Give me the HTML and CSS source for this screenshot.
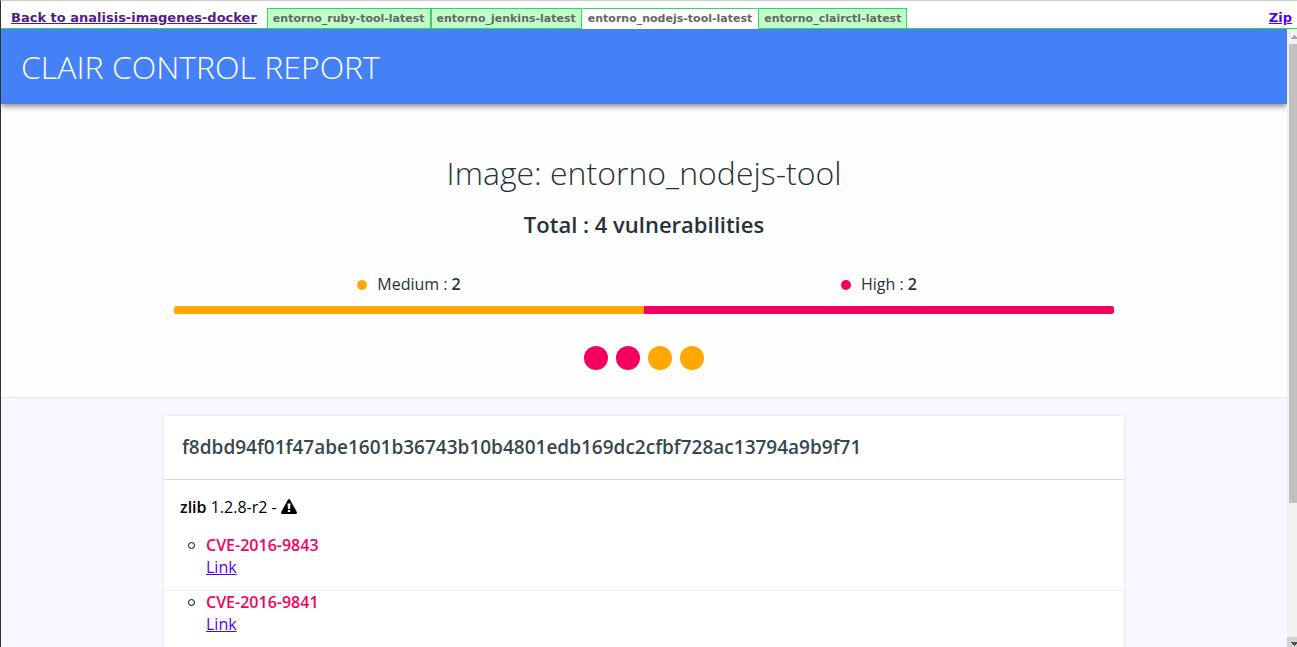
FILE: index.html
```
<!DOCTYPE html>
<html lang="en">
<head>
<meta charset="utf-8">
<title>Clair Control Report</title>
<link rel="stylesheet" href="styles.css">
</head>
<body>
<nav class="tabbar">
  <a class="back" href="#back">Back to analisis-imagenes-docker</a>
  <div class="tabs">
    <button class="tab" type="button">entorno_ruby-tool-latest</button>
    <button class="tab" type="button">entorno_jenkins-latest</button>
    <button class="tab active" type="button">entorno_nodejs-tool-latest</button>
    <button class="tab" type="button">entorno_clairctl-latest</button>
  </div>
  <a class="zip" href="#zip">Zip</a>
</nav>
<div class="frame">
  <main class="report">
    <header class="banner"><h1>CLAIR CONTROL REPORT</h1></header>
    <section class="summary">
      <h2>Image: entorno_nodejs-tool</h2>
      <p class="total">Total : 4 vulnerabilities</p>
      <div class="graph">
        <div class="level"><p><span class="dot medium"></span>Medium : <strong>2</strong></p><div class="bar medium"></div></div>
        <div class="level"><p><span class="dot high"></span>High : <strong>2</strong></p><div class="bar high"></div></div>
      </div>
      <div class="bullets">
        <span class="bullet high"></span><span class="bullet high"></span><span class="bullet medium"></span><span class="bullet medium"></span>
      </div>
    </section>
    <section class="layers">
      <article class="layer">
        <h3>f8dbd94f01f47abe1601b36743b10b4801edb169dc2cfbf728ac13794a9b9f71</h3>
        <p class="feature"><strong>zlib</strong> 1.2.8-r2 -
          <svg class="warning" viewBox="0 0 16 15" role="img" aria-label="Warning"><path fill="currentColor" fill-rule="evenodd" d="M6.9.7Q8-.7 9.1.7L15.8 13Q16.4 14.7 14.8 15H1.2Q-.4 14.7.2 13ZM6.5 4.5 6.9 10H9.1L9.5 4.5ZM6.8 11V13H9.2V11Z"/></svg>
        </p>
        <ul class="cves">
          <li><strong>CVE-2016-9843</strong><a href="#cve-9843">Link</a></li>
          <li><strong>CVE-2016-9841</strong><a href="#cve-9841">Link</a></li>
        </ul>
      </article>
    </section>
  </main>
  <div class="scrollbar" aria-hidden="true">
    <svg class="arrow" viewBox="0 0 10 15"><path fill="#a3a3a3" d="M4 10V9H5V8H6V7H7V6H8V7H9V8H10V10Z"/></svg>
    <div class="track"><div class="thumb"></div></div>
    <svg class="arrow down" viewBox="0 0 10 10"><path fill="#505050" d="M4 5H10V7H9V8H8V9H7V8H6V7H5V6H4Z"/></svg>
  </div>
</div>
</body>
</html>
```
FILE: styles.css
```
*,
*::before {
  box-sizing: border-box;
}

body {
  margin: 0;
  height: 100vh;
  overflow: hidden;
  display: flex;
  flex-direction: column;
  border-left: 1px solid #333;
  border-top: 1px solid #ccc;
  background: #fff;
  font-family: "Open Sans", sans-serif;
  font-size: 16px;
  line-height: 22px;
}

h1, h2, h3, p, ul {
  margin: 0;
}

strong {
  font-weight: 600;
}

.tabbar {
  display: flex;
  flex: none;
  height: 28px;
  padding: 7px 5px 0 10px;
  border-bottom: 1px solid #3bd35f;
  font-family: "DejaVu Sans", sans-serif;
  font-size: 13px;
  font-weight: bold;
  line-height: 20px;
}

.back {
  color: #551a8b;
}

.tabs {
  display: flex;
  height: 21px;
  margin-left: 10px;
}

.tab {
  padding: 0 5px;
  border: 1px solid #3bd35f;
  background: #bfffc8;
  color: #666;
  font: bold 11px/20px "DejaVu Sans", sans-serif;
}

.tab.active {
  border-color: #3bd35f #fff #fff;
  background: #fff;
}

.zip {
  margin-left: auto;
  color: #50e;
}

.frame {
  display: flex;
  flex: 1;
  min-height: 0;
}

.report {
  display: flex;
  flex-direction: column;
  flex: 1;
  overflow: hidden;
}

.banner {
  position: relative;
  flex: none;
  padding: 16px 20px 15px;
  background: #4481f6;
  box-shadow: 0 2px 6px rgba(0, 0, 0, 0.5);
  color: #fff;
}

h1, h2 {
  font-size: 32px;
  font-weight: 300;
  line-height: 44px;
}

.summary {
  flex: none;
  padding: 47px 16px 27px;
  border-bottom: 1px solid #e8e8ee;
  background: #fefefe;
  color: #263238;
  text-align: center;
}

.total {
  margin-top: 13px;
  font-size: 22px;
  font-weight: 600;
  line-height: 32px;
}

.graph {
  display: flex;
  max-width: 940px;
  margin: 33px auto 32px;
}

.level {
  flex: 1;
}

.dot {
  display: inline-block;
  width: 10px;
  height: 10px;
  margin-right: 10px;
  border-radius: 50%;
}

.bar {
  height: 8px;
  margin-top: 11px;
}

.level:first-child .bar {
  border-radius: 2px 0 0 2px;
}

.level:last-child .bar {
  border-radius: 0 2px 2px 0;
}

.medium {
  background: #ffa900;
}

.high {
  background: #f5005e;
}

.bullets {
  display: flex;
  justify-content: center;
  gap: 8px;
}

.bullet {
  width: 24px;
  height: 24px;
  border-radius: 50%;
}

.layers {
  flex: 1 0 auto;
  padding: 18px 16px;
  background: #f8f7ff;
}

.layer {
  max-width: 960px;
  margin: 0 auto;
  padding-bottom: 16px;
  border-radius: 4px;
  background: #fff;
  box-shadow: 0 0 3px rgba(0, 0, 0, 0.1);
}

h3 {
  padding: 18px;
  border-bottom: 1px solid #cfd8dc;
  color: #37474f;
  font-size: 19px;
  font-weight: 600;
  line-height: 27px;
}

.feature {
  padding: 16px;
}

.warning {
  width: 16px;
  height: 15px;
  vertical-align: -1px;
}

.cves {
  padding: 0;
  list-style: none;
}

.cves li {
  display: grid;
  grid-template-columns: 42px 1fr;
  padding-bottom: 12px;
}

.cves li::before {
  content: "";
  grid-row: span 2;
  width: 7px;
  height: 7px;
  margin: 8px 0 0 24px;
  border: 1px solid #000;
  border-radius: 50%;
}

.cves li + li {
  border-top: 1px solid #eceff1;
}

.cves strong {
  color: #f5005e;
}

.cves a {
  grid-column: 2;
  justify-self: start;
  color: #50e;
}

.scrollbar {
  display: flex;
  flex-direction: column;
  flex: none;
  width: 10px;
  background: #f1f1f1;
}

.arrow {
  flex: none;
  width: 10px;
  height: 15px;
}

.arrow.down {
  height: 10px;
  background: #d2d2d2;
}

.track {
  flex: 1;
}

.thumb {
  height: 77.4%;
  margin-left: 2px;
  background: #c1c1c1;
}
```
